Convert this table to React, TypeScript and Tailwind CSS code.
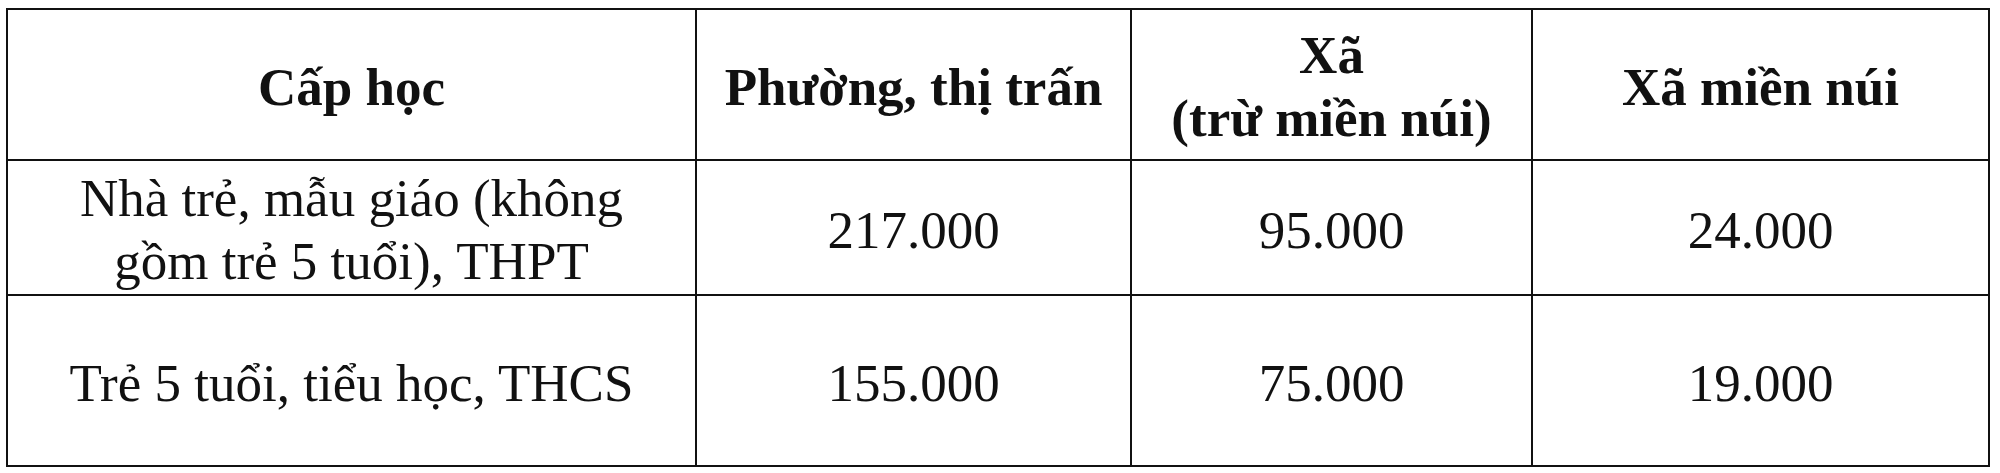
import React from "react";

const headers = ["Cấp học", "Phường, thị trấn", "Xã\n(trừ miền núi)", "Xã miền núi"];

const rows = [
  { label: "Nhà trẻ, mẫu giáo (không\ngồm trẻ 5 tuổi), THPT", values: ["217.000", "95.000", "24.000"] },
  { label: "Trẻ 5 tuổi, tiểu học, THCS", values: ["155.000", "75.000", "19.000"] },
];

const Cell = ({ children, last, bottom, bold }: { children: React.ReactNode; last?: boolean; bottom?: boolean; bold?: boolean }) => (
  <div
    className={`flex items-center justify-center text-center whitespace-pre-line pt-[5px] ${
      last ? "" : "border-r-2"
    } ${bottom ? "" : "border-b-2"} border-[#111] ${bold ? "font-bold" : ""}`}
  >
    {children}
  </div>
);

const App = () => {
  return (
    <div className="w-[2000px] h-[473px] bg-white pl-[6px] pt-[8px] font-['Liberation_Serif',serif] text-[#111] text-[53px] leading-[63px]">
      <div className="w-[1984px] border-2 border-[#111] grid grid-cols-[689px_435px_401px_455px] grid-rows-[151px_135px_169px]">
        {headers.map((h, i) => (
          <Cell key={h} bold last={i === headers.length - 1}>
            {h}
          </Cell>
        ))}
        {rows.map((row, r) => (
          <React.Fragment key={r}>
            <Cell bottom={r === rows.length - 1}>{row.label}</Cell>
            {row.values.map((v, i) => (
              <Cell key={i} bottom={r === rows.length - 1} last={i === row.values.length - 1}>
                {v}
              </Cell>
            ))}
          </React.Fragment>
        ))}
      </div>
    </div>
  );
};

export default App;
